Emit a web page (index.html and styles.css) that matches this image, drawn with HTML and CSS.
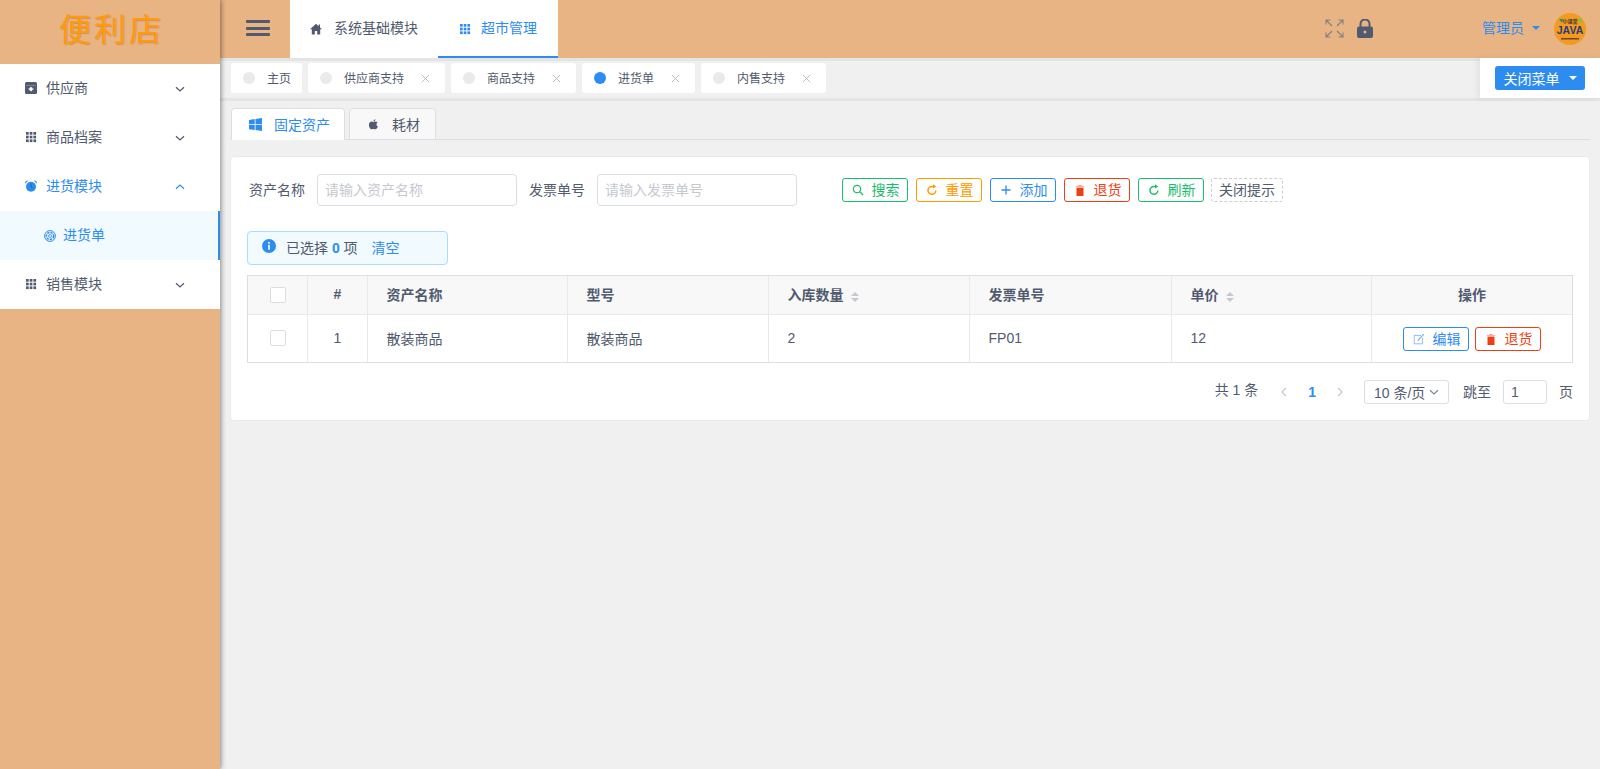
FILE: index.html
```html
<!DOCTYPE html>
<html lang="zh-CN">
<head>
<meta charset="utf-8">
<title>便利店</title>
<link rel="stylesheet" href="styles.css">
</head>
<body>
<svg class="defs" width="0" height="0" aria-hidden="true">
  <symbol id="i-archive" viewBox="0 0 12 12"><rect x="0" y="0" width="12" height="12" rx="1.5" fill="currentColor"/><rect x="1" y="3" width="10" height=".7" fill="#8b93a5"/><path d="M6 9.500 3 6.500h1.800V5.200h2.400v1.300H9z" fill="#fff"/></symbol>
  <symbol id="i-keypad" viewBox="0 0 12 12"><g fill="currentColor"><rect x="1" y="1" width="2.700" height="2.700"/><rect x="4.700" y="1" width="2.700" height="2.700"/><rect x="8.400" y="1" width="2.700" height="2.700"/><rect x="1" y="4.700" width="2.700" height="2.700"/><rect x="4.700" y="4.700" width="2.700" height="2.700"/><rect x="8.400" y="4.700" width="2.700" height="2.700"/><rect x="1" y="8.400" width="2.700" height="2.700"/><rect x="4.700" y="8.400" width="2.700" height="2.700"/><rect x="8.400" y="8.400" width="2.700" height="2.700"/></g></symbol>
  <symbol id="i-alarm" viewBox="0 0 12 12"><circle cx="6" cy="6.800" r="5" fill="currentColor"/><path d="M0 3.800C-.2 1.500 1.400.2 3.400.6zM12 3.800C12.200 1.500 10.600.2 8.600.6z" fill="currentColor"/><path d="M6 3.800v3l1.800 1" stroke="#1c5fae" stroke-width=".9" fill="none"/></symbol>
  <symbol id="i-aperture" viewBox="0 0 12 12"><circle cx="6" cy="6" r="5.400" fill="none" stroke="currentColor" stroke-width="1"/><circle cx="6" cy="6" r="3.600" fill="none" stroke="currentColor" stroke-width="1.500" stroke-dasharray="2.400 1"/><circle cx="6" cy="6" r="1.500" fill="none" stroke="currentColor" stroke-width=".8"/></symbol>
  <symbol id="i-home" viewBox="0 0 12 12"><path d="M6 .8 0 6.300h1.800V11.500h3V8h2.400v3.500h3V6.300H12L10 4.500V1.500H8.700v1.800z" fill="currentColor"/></symbol>
  <symbol id="i-windows" viewBox="0 0 13 13"><path d="M0 1.900 5.700 1v5.200H0zM6.500.9 13 0v6.200H6.500zM0 7h5.700v5.100L0 11.200zM6.500 7H13v6l-6.500-.9z" fill="currentColor"/></symbol>
  <symbol id="i-apple" viewBox="0 0 12 12"><path d="M8.100.2c.1 1.200-1 2.400-2.200 2.300C5.800 1.300 7 .2 8.100.2zM6 3.200c.6 0 1.200-.5 2.200-.5.900 0 1.700.5 2.200 1.200-1.800 1.100-1.500 3.500.4 4.300-.5 1.300-1.500 3.100-2.600 3.100-.8 0-1.100-.5-2.100-.5s-1.300.5-2.100.5C2.500 11.300 1 8.800 1 6.500c0-2.300 1.500-3.700 2.900-3.700.9 0 1.500.4 2.100.4z" fill="currentColor"/></symbol>
  <symbol id="i-search" viewBox="0 0 12 12"><circle cx="5" cy="5" r="3.700" fill="none" stroke="currentColor" stroke-width="1.200"/><path d="M7.800 7.800 11 11" stroke="currentColor" stroke-width="1.300"/></symbol>
  <symbol id="i-refresh" viewBox="0 0 12 12"><path d="M9.800 6.500A3.900 3.900 0 1 1 6 2.400h1.600" fill="none" stroke="currentColor" stroke-width="1.500"/><path d="M7 .2 10.200 2.400 7 4.600z" fill="currentColor"/></symbol>
  <symbol id="i-plus" viewBox="0 0 12 12"><path d="M6 1.500v9M1.500 6h9" stroke="currentColor" stroke-width="1.300"/></symbol>
  <symbol id="i-trash" viewBox="0 0 12 12"><path d="M2.500 3.600h7V12h-7z" fill="currentColor"/><path d="M1.800 2.300h8.400v.8H1.800zM4.500 1h3v1h-3z" fill="currentColor" opacity=".55"/></symbol>
  <symbol id="i-edit" viewBox="0 0 12 12"><path d="M8 2.400H1.200v8.400h8.400V5" fill="none" stroke="currentColor" stroke-width="1" opacity=".55"/><path d="M4.800 7.600 10.800 1.200" stroke="currentColor" stroke-width="1.100" opacity=".7"/></symbol>
  <symbol id="i-down" viewBox="0 0 12 12"><path d="M2 4.200 6 8l4-3.800" fill="none" stroke="currentColor" stroke-width="1.200"/></symbol>
  <symbol id="i-up" viewBox="0 0 12 12"><path d="M2 7.800 6 4l4 3.800" fill="none" stroke="currentColor" stroke-width="1.200"/></symbol>
  <symbol id="i-left" viewBox="0 0 12 12"><path d="M7.800 2 4 6l3.800 4" fill="none" stroke="currentColor" stroke-width="1.200"/></symbol>
  <symbol id="i-right" viewBox="0 0 12 12"><path d="M4.200 2 8 6l-3.800 4" fill="none" stroke="currentColor" stroke-width="1.200"/></symbol>
  <symbol id="i-x" viewBox="0 0 10 10"><path d="M1 1l8 8M9 1 1 9" stroke="currentColor" stroke-width="1"/></symbol>
  <symbol id="i-info" viewBox="0 0 14 14"><circle cx="7" cy="7" r="7" fill="currentColor"/><rect x="6.200" y="3" width="1.600" height="1.700" fill="#fff"/><rect x="6.200" y="5.800" width="1.600" height="5" fill="#fff"/></symbol>
</svg>

<aside class="sidebar">
  <div class="logo">便利店</div>
  <nav class="menu">
    <a class="menu-item"><svg class="mi-icon"><use href="#i-archive"/></svg><span class="mi-text">供应商</span><svg class="mi-arrow"><use href="#i-down"/></svg></a>
    <a class="menu-item"><svg class="mi-icon"><use href="#i-keypad"/></svg><span class="mi-text">商品档案</span><svg class="mi-arrow"><use href="#i-down"/></svg></a>
    <a class="menu-item is-open"><svg class="mi-icon"><use href="#i-alarm"/></svg><span class="mi-text">进货模块</span><svg class="mi-arrow"><use href="#i-up"/></svg></a>
    <a class="menu-sub"><svg class="mi-icon"><use href="#i-aperture"/></svg><span>进货单</span></a>
    <a class="menu-item"><svg class="mi-icon"><use href="#i-keypad"/></svg><span class="mi-text">销售模块</span><svg class="mi-arrow"><use href="#i-down"/></svg></a>
  </nav>
</aside>

<main class="main">
  <header class="topbar">
    <button class="burger" aria-label="menu"><span></span><span></span><span></span></button>
    <div class="modules">
      <a class="module"><svg class="module-icon"><use href="#i-home"/></svg>系统基础模块</a>
      <a class="module is-active"><svg class="module-icon"><use href="#i-keypad"/></svg>超市管理</a>
    </div>
    <div class="top-right">
      <svg class="expand" viewBox="0 0 19 19"><path d="M1 1l6 6M1 5.500V1h4.500M18 1l-6 6M18 5.500V1h-4.500M1 18l6-6M1 13.500V18h4.500M18 18l-6-6M18 13.500V18h-4.500" fill="none" stroke="currentColor" stroke-width="1.100"/></svg>
      <svg class="lock" viewBox="0 0 16 19"><path d="M3.500 8V5a4.500 4.500 0 0 1 9 0v3" fill="none" stroke="currentColor" stroke-width="2"/><rect y="7.500" width="16" height="11.500" rx="2" fill="currentColor"/><circle cx="8" cy="13" r="1.500" fill="#e8b484"/></svg>
      <span class="user">管理员</span><i class="caret caret-blue"></i>
      <svg class="avatar" viewBox="0 0 32 32"><circle cx="16" cy="16" r="16" fill="#f39a1f"/><path d="M5 6h5L7.500 9.500z" fill="#2f8f6b"/><circle cx="26" cy="7.500" r="2.200" fill="#8fbf3a"/><text x="16" y="9.500" class="av-small">小课堂</text><text x="16" y="20.500" class="av-big">JAVA</text><rect x="7" y="25" width="18" height="1.500" fill="#6b4a2a"/></svg>
    </div>
  </header>

  <div class="tagbar">
    <div class="tags">
      <a class="tag tag-home"><i class="dot"></i><span>主页</span></a>
      <a class="tag"><i class="dot"></i><span>供应商支持</span><svg class="tag-x"><use href="#i-x"/></svg></a>
      <a class="tag"><i class="dot"></i><span>商品支持</span><svg class="tag-x"><use href="#i-x"/></svg></a>
      <a class="tag"><i class="dot is-on"></i><span>进货单</span><svg class="tag-x"><use href="#i-x"/></svg></a>
      <a class="tag"><i class="dot"></i><span>内售支持</span><svg class="tag-x"><use href="#i-x"/></svg></a>
    </div>
    <div class="close-box"><button class="close-menu">关闭菜单<i class="caret caret-white"></i></button></div>
  </div>

  <div class="page-tabs">
    <a class="page-tab is-active"><svg class="pt-icon"><use href="#i-windows"/></svg>固定资产</a>
    <a class="page-tab"><svg class="pt-icon pt-apple"><use href="#i-apple"/></svg>耗材</a>
  </div>

  <section class="card">
    <form class="filters">
      <label class="f-label">资产名称</label>
      <input class="f-input" placeholder="请输入资产名称">
      <label class="f-label">发票单号</label>
      <input class="f-input" placeholder="请输入发票单号">
      <div class="actions">
        <a class="btn btn-green"><svg class="btn-icon"><use href="#i-search"/></svg>搜索</a>
        <a class="btn btn-orange"><svg class="btn-icon"><use href="#i-refresh"/></svg>重置</a>
        <a class="btn btn-blue"><svg class="btn-icon"><use href="#i-plus"/></svg>添加</a>
        <a class="btn btn-red"><svg class="btn-icon"><use href="#i-trash"/></svg>退货</a>
        <a class="btn btn-green"><svg class="btn-icon"><use href="#i-refresh"/></svg>刷新</a>
        <a class="btn btn-dashed">关闭提示</a>
      </div>
    </form>

    <div class="alert">
      <svg class="alert-icon"><use href="#i-info"/></svg>
      <span>已选择 <b class="count">0</b> 项</span>
      <a class="alert-link">清空</a>
    </div>

    <table class="grid">
      <colgroup><col class="c-narrow"><col class="c-narrow"><col class="c-first"><col class="c-wide"><col class="c-wide"><col class="c-bill"><col class="c-first"><col></colgroup>
      <thead>
        <tr>
          <th class="center"><i class="check"></i></th>
          <th class="center">#</th>
          <th>资产名称</th>
          <th>型号</th>
          <th>入库数量<i class="sort"></i></th>
          <th>发票单号</th>
          <th>单价<i class="sort"></i></th>
          <th class="center">操作</th>
        </tr>
      </thead>
      <tbody>
        <tr>
          <td class="center"><i class="check"></i></td>
          <td class="center">1</td>
          <td>散装商品</td>
          <td>散装商品</td>
          <td>2</td>
          <td>FP01</td>
          <td>12</td>
          <td class="center ops">
            <a class="btn btn-blue"><svg class="btn-icon"><use href="#i-edit"/></svg>编辑</a>
            <a class="btn btn-red"><svg class="btn-icon"><use href="#i-trash"/></svg>退货</a>
          </td>
        </tr>
      </tbody>
    </table>

    <div class="pager">
      <span class="p-total">共 1 条</span>
      <svg class="p-arrow"><use href="#i-left"/></svg>
      <b class="p-num">1</b>
      <svg class="p-arrow"><use href="#i-right"/></svg>
      <div class="p-select">10 条/页<svg class="p-caret"><use href="#i-down"/></svg></div>
      <span class="p-jump">跳至</span>
      <input class="p-input" value="1">
      <span class="p-unit">页</span>
    </div>
  </section>
</main>
</body>
</html>
```

FILE: styles.css
```css
* { box-sizing: border-box; }
html, body { height: 100%; }
body {
  margin: 0;
  display: flex;
  height: 769px;
  overflow: hidden;
  font-family: "Liberation Sans", "Noto Sans CJK SC", sans-serif;
  font-size: 14px;
  color: #515a6e;
  background: #f0f0f0;
}
i { font-style: normal; display: inline-block; }
svg { display: block; flex: none; }
a { color: inherit; text-decoration: none; }
.defs { position: absolute; }

/* sidebar */
.sidebar {
  width: 220px;
  flex: none;
  background: #e8b484;
  box-shadow: 1px 0 5px rgba(0, 0, 0, .45);
  position: relative;
  z-index: 3;
}
.logo {
  height: 64px;
  display: flex;
  align-items: center;
  justify-content: center;
  padding: 0 0 10px 3px;
  font-family: "Noto Sans CJK SC", sans-serif;
  font-size: 32px;
  letter-spacing: 3px;
  line-height: 1;
  color: #ff9a0e;
  text-shadow: 1px 1px 1px rgba(150, 90, 20, .35);
}
.menu { background: #fff; }
.menu-item {
  height: 49px;
  display: flex;
  align-items: center;
  padding: 0 0 3px 25px;
}
.mi-icon { width: 12px; height: 12px; margin-top: 1px; }
.mi-text { margin-left: 9px; }
.mi-arrow { width: 12px; height: 12px; margin: 3px 34px 0 auto; }
.menu-item.is-open { color: #2d8cf0; }
.menu-sub {
  height: 49px;
  display: flex;
  align-items: center;
  gap: 7px;
  padding: 0 0 3px 44px;
  color: #2d8cf0;
  background: #f0faff;
  border-right: 2px solid #2d8cf0;
}
.menu-sub .mi-icon { margin-top: 3px; }

/* main column */
.main { flex: 1; min-width: 0; display: flex; flex-direction: column; }
.topbar {
  height: 58px;
  flex: none;
  display: flex;
  background: #e8b484;
}
.burger {
  width: 70px;
  padding: 20px 0 0 26px;
  border: 0;
  background: none;
  display: flex;
  flex-direction: column;
  gap: 3.5px;
}
.burger span { width: 24px; height: 3px; background: #515a6e; border-radius: 1px; }
.modules { display: flex; background: #fff; }
.module {
  height: 58px;
  padding: 0 0 4px 20px;
  display: flex;
  align-items: center;
  gap: 12px;
  white-space: nowrap;
}
.module-icon { width: 12px; height: 12px; margin-top: 3px; }
.module:first-child { width: 148px; }
.module.is-active {
  width: 120px;
  padding: 0 0 3px 21px;
  gap: 10px;
  color: #2d8cf0;
  border-bottom: 2px solid #2d8cf0;
}
.module.is-active .module-icon { margin-top: 4px; }
.top-right {
  margin-left: auto;
  display: flex;
  align-items: center;
  padding-right: 14px;
}
.expand { width: 19px; height: 19px; color: #808080; margin-bottom: 2px; }
.lock { width: 16px; height: 19px; color: #515a6e; margin-left: 13px; margin-bottom: 2px; }
.user { margin: 0 0 4px 109px; color: #2d8cf0; }
.caret { width: 0; height: 0; border: 4px solid transparent; border-bottom: 0; border-top-color: currentColor; }
.caret-blue { color: #2d8cf0; margin-left: 8px; margin-right: 14px; margin-top: -3px; }
.avatar { width: 32px; height: 32px; }
.av-small { font-size: 5px; font-weight: 700; text-anchor: middle; fill: #4a3a3a; font-family: "Noto Sans CJK SC", sans-serif; }
.av-big { font-size: 10.5px; font-weight: 700; text-anchor: middle; fill: #2f3a7a; font-family: "Liberation Sans", sans-serif; }

/* tag bar */
.tagbar {
  height: 43px;
  flex: none;
  display: flex;
  border-bottom: 3px solid #e4e4e4;
}
.tags {
  flex: 1;
  display: flex;
  gap: 6px;
  padding: 2px 0 5px 11px;
  border-top: 3px solid #e4e4e4;
}
.tag {
  height: 30px;
  display: flex;
  align-items: center;
  padding: 0 12px 1px;
  background: #fff;
  border-radius: 3px;
  font-size: 12px;
}
.tag-home { padding-right: 11px; }
.dot { width: 12px; height: 12px; border-radius: 50%; background: #e8eaec; margin: 1px 12px 0 0; }
.dot.is-on { background: #2d8cf0; }
.tag-x { width: 9px; height: 9px; margin: 1px 3px 0 17px; color: #b5b5b5; }
.close-box {
  width: 120px;
  background: #fff;
  display: flex;
  align-items: center;
  padding-left: 15px;
  box-shadow: -3px 0 6px rgba(0, 0, 0, .06);
}
.close-menu {
  width: 90px;
  height: 24px;
  border: 0;
  border-radius: 3px;
  background: #2d8cf0;
  color: #fff;
  font: inherit;
  display: flex;
  align-items: center;
  justify-content: center;
  gap: 9px;
  padding: 0 0 1px;
}
.caret-white { color: #fff; margin-top: 1px; }

/* page tabs */
.page-tabs {
  margin: 7px 10px 0;
  padding-left: 1px;
  height: 32px;
  flex: none;
  display: flex;
  gap: 4px;
  border-bottom: 1px solid #dcdee2;
}
.page-tab {
  height: 32px;
  display: flex;
  align-items: center;
  padding: 0 15px 1px 18px;
  background: #f8f8f9;
  border: 1px solid #dcdee2;
  border-radius: 4px 4px 0 0;
  gap: 12px;
}
.page-tab.is-active { padding: 0 14px 1px 17px; background: #fff; color: #2d8cf0; border-bottom-color: #fff; }
.pt-icon { width: 13px; height: 13px; margin-top: 2px; }
.pt-apple { width: 11px; height: 11px; margin-right: 1px; }

/* card */
.card {
  margin: 16px 10px 0;
  height: 265px;
  flex: none;
  padding: 17px 16px 16px;
  background: #fff;
  border: 1px solid #e8eaec;
  border-radius: 4px;
}
.filters { display: flex; align-items: center; height: 32px; padding-left: 2px; }
.f-label { width: 56px; margin-right: 12px; padding-bottom: 2px; white-space: nowrap; }
.f-input {
  width: 200px;
  height: 32px;
  margin-right: 12px;
  padding: 0 7px;
  border: 1px solid #dcdee2;
  border-radius: 4px;
  font: inherit;
  color: #515a6e;
  outline: none;
}
.f-input::placeholder { color: #c5c8ce; }
.actions { display: flex; gap: 8px; margin-left: 33px; }
.btn {
  width: 66px;
  height: 24px;
  display: inline-flex;
  align-items: center;
  padding: 0 0 2px 9px;
  gap: 7.5px;
  border: 1px solid currentColor;
  border-radius: 3px;
  background: #fff;
  white-space: nowrap;
}
.btn-icon { width: 12px; height: 12px; margin-top: 2px; }
.btn-green { color: #19be6b; }
.btn-orange { color: #ff9900; }
.btn-blue { color: #2d8cf0; }
.btn-red { color: #ed3f14; }
.btn-dashed { width: 72px; margin-left: -1px; padding: 0 0 2px 7px; color: #515a6e; border: 1px dashed #ccc; }

.alert {
  width: 201px;
  height: 34px;
  margin-top: 25px;
  display: flex;
  align-items: center;
  padding: 0 0 2px 14px;
  background: #f0faff;
  border: 1px solid #abdcff;
  border-radius: 4px;
}
.alert-icon { width: 14px; height: 14px; margin: -2px 10px 0 0; color: #2d8cf0; }
.count { color: #2d8cf0; }
.alert-link { margin-left: 14px; color: #2d8cf0; }

.grid {
  width: 100%;
  margin-top: 10px;
  table-layout: fixed;
  border-collapse: separate;
  border-spacing: 0;
  border: 1px solid #dcdee2;
}
.c-narrow { width: 60px; }
.c-first { width: 200px; }
.c-wide { width: 201px; }
.c-bill { width: 202px; }
.grid th, .grid td {
  padding: 0 0 2px 18.5px;
  text-align: left;
  border-right: 1px solid #e8eaec;
  font-size: 14px;
}
.grid th:last-child, .grid td:last-child { border-right: 0; }
.grid th {
  height: 39px;
  font-weight: 700;
  background: #f8f8f9;
  border-bottom: 1px solid #e8eaec;
}
.grid td { height: 47px; }
.grid .center { padding: 0 0 2px; text-align: center; }
.grid .ops { padding: 0; }
.check {
  width: 16px;
  height: 16px;
  vertical-align: middle;
  border: 1px solid #dcdee2;
  border-radius: 2px;
  background: #fff;
}
.sort {
  position: relative;
  width: 8px;
  height: 10px;
  margin-left: 7px;
  vertical-align: -2px;
}
.sort::before, .sort::after {
  content: "";
  position: absolute;
  left: 0;
  border: 4px solid transparent;
}
.sort::before { top: 0; border-bottom-color: #c5c8ce; border-top: 0; }
.sort::after { bottom: 0; border-top-color: #c5c8ce; border-bottom: 0; }
.ops .btn { vertical-align: middle; }
.ops .btn + .btn { margin-left: 2px; }

.pager {
  margin-top: 17px;
  height: 24px;
  display: flex;
  align-items: center;
  justify-content: flex-end;
}
.p-total { padding-bottom: 6px; margin-right: 20px; }
.p-arrow { width: 12px; height: 12px; color: #c5c8ce; }
.p-num { margin: 0 18px; color: #2d8cf0; }
.p-select {
  width: 85px;
  height: 24px;
  margin-left: 18px;
  display: flex;
  align-items: center;
  padding: 0 0 0 9px;
  gap: 3px;
  border: 1px solid #dcdee2;
  border-radius: 3px;
  white-space: nowrap;
}
.p-caret { width: 12px; height: 12px; color: #808695; }
.p-jump { margin-left: 14px; padding-bottom: 2px; }
.p-input {
  width: 44px;
  height: 24px;
  margin-left: 12px;
  padding: 0 7px;
  border: 1px solid #dcdee2;
  border-radius: 3px;
  font: inherit;
  color: #515a6e;
  outline: none;
}
.p-unit { margin-left: 12px; padding-bottom: 2px; }
```
